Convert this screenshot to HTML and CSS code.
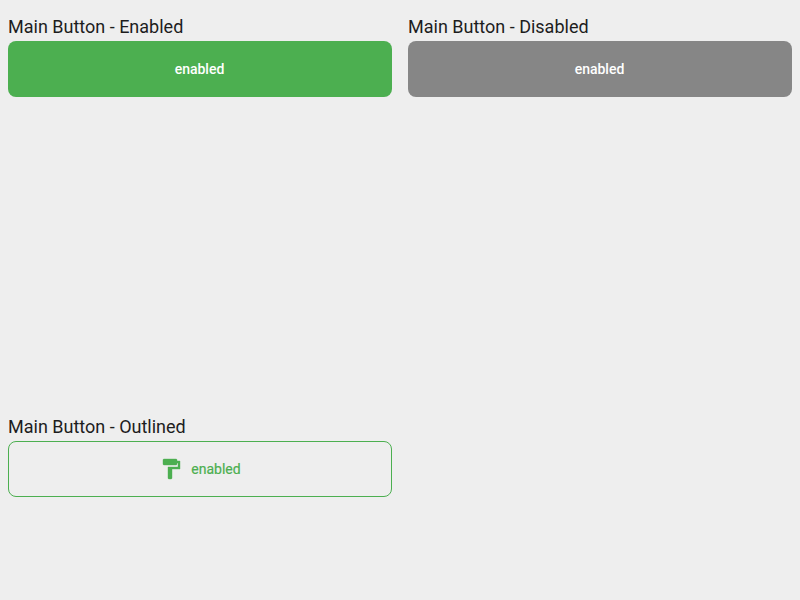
FILE: index.html
```html
<!DOCTYPE html>
<html lang="en">
<head>
<meta charset="utf-8">
<title>Main Button</title>
<link rel="stylesheet" href="styles.css">
</head>
<body>
<main class="grid">
  <section class="cell">
    <h2 class="title">Main Button - Enabled</h2>
    <button class="button">enabled</button>
  </section>
  <section class="cell">
    <h2 class="title">Main Button - Disabled</h2>
    <button class="button button-disabled" disabled>enabled</button>
  </section>
  <section class="cell">
    <h2 class="title">Main Button - Outlined</h2>
    <button class="button button-outlined">
      <svg class="icon" viewBox="0 0 24 24" aria-hidden="true"><path d="M18 4V3c0-.55-.45-1-1-1H5c-.55 0-1 .45-1 1v4c0 .55.45 1 1 1h12c.55 0 1-.45 1-1V6h1v4H9v11c0 .55.45 1 1 1h2c.55 0 1-.45 1-1v-9h8V4h-3z"/></svg>
      <span>enabled</span>
    </button>
  </section>
</main>
</body>
</html>
```
FILE: styles.css
```css
body {
  margin: 0;
  background: #eeeeee;
  color: #1d1d1d;
  font-family: Roboto, sans-serif;
}

.grid {
  display: grid;
  grid-template-columns: repeat(2, 400px);
  grid-template-rows: 400px 200px;
  height: 600px;
  overflow: hidden;
}

.cell {
  padding: 16px 8px 0;
}

.title {
  margin: 0 0 4px;
  font-size: 18px;
  font-weight: 400;
  line-height: 21px;
}

.button {
  display: flex;
  align-items: center;
  justify-content: center;
  gap: 8px;
  box-sizing: border-box;
  width: 100%;
  height: 56px;
  padding: 0 1px 0 0;
  border: 0;
  border-radius: 8px;
  background: #4caf50;
  color: #ffffff;
  font: 500 14px/20px Roboto, sans-serif;
}

.button-disabled {
  background: #868686;
}

.button-outlined {
  padding: 0;
  border: 1px solid #4caf50;
  background: transparent;
  color: #4caf50;
  font-weight: 400;
  -webkit-text-stroke: 0.2px currentColor;
}

.icon {
  width: 24px;
  height: 24px;
  fill: currentColor;
  stroke: currentColor;
  stroke-width: 0.4;
}
```
